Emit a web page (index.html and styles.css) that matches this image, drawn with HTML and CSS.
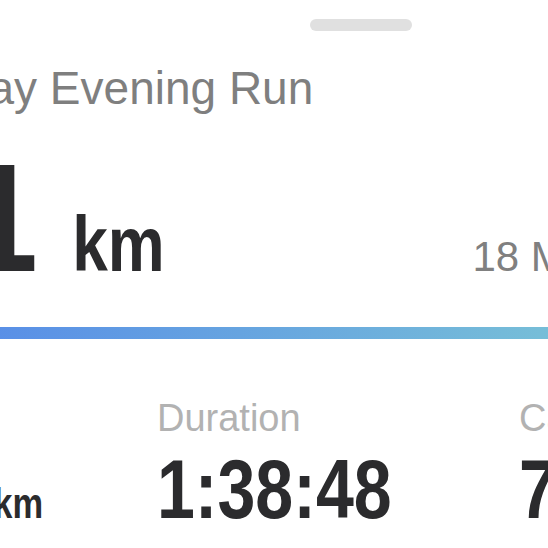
FILE: index.html
```html
<!DOCTYPE html>
<html lang="en">
  <head>
    <meta charset="UTF-8" />
    <meta name="viewport" content="width=device-width, initial-scale=1.0" />
    <title>Wednesday Evening Run</title>
    <link rel="stylesheet" href="styles.css">
  </head>
  <body>
    <div class="sheet">
      <div class="handle"></div>
      <h1 class="title">Wednesday Evening Run</h1>
      <div class="hero">
        <span class="distance">21.1<span class="hero-unit">km</span></span>
        <span class="date">18 May 2022</span>
      </div>
      <div class="bar"></div>
      <div class="stats">
        <div class="stat">
          <div class="label">Avg Pace</div>
          <div class="value">4:41<span class="value-unit">/km</span></div>
        </div>
        <div class="stat">
          <div class="label">Duration</div>
          <div class="value">1:38:48</div>
        </div>
        <div class="stat">
          <div class="label">Calories</div>
          <div class="value">712</div>
        </div>
      </div>
    </div>
  </body>
</html>
```

FILE: styles.css
```css
body {
  margin: 0;
  background: #fff;
  overflow: hidden;
  font-family: "Liberation Sans", Arial, sans-serif;
}

/* the sheet is wider than the window, we only see a part of it */
.sheet {
  width: 1180px;
  margin-left: -229px;
  padding: 19px 24px 0;
  box-sizing: border-box;
}

.handle {
  width: 102px;
  height: 12px;
  margin: 0 auto;
  border-radius: 6px;
  background-color: #e0e0e0;
}

.title {
  margin: 34px 0 0;
  font-size: 46px;
  font-weight: normal;
  line-height: 1;
  color: #7f7f7f;
  white-space: nowrap;
}

.hero {
  display: flex;
  align-items: baseline;
  margin-top: 30px;
}

/* no narrow face installed, so squeeze the bold one */
.distance,
.value {
  font-weight: bold;
  color: #2b2b2d;
  line-height: 1;
  white-space: nowrap;
  transform: scaleX(0.82);
  transform-origin: 0 0;
}

.distance {
  margin-left: -3px;
  font-size: 154px;
}

.hero-unit {
  margin-left: 42px;
  font-size: 78px;
}

.date {
  margin-left: 226px;
  font-size: 42px;
  line-height: 1;
  color: #808080;
  white-space: nowrap;
}

.bar {
  height: 12px;
  margin-top: 32px;
  background: linear-gradient(90deg, #4e80ee 0%, #5a91e6 19.4%, #76bdd8 65.8%, #82d2d0 100%);
}

.stats {
  display: grid;
  grid-template-columns: repeat(3, 362px);
  margin-top: 60px;
}

.label {
  font-size: 38px;
  line-height: 1;
  color: #b2b2b2;
  white-space: nowrap;
}

.value {
  margin-top: 11px;
  font-size: 83px;
}

.value-unit {
  margin-left: 64px;
  font-size: 42px;
}
```
